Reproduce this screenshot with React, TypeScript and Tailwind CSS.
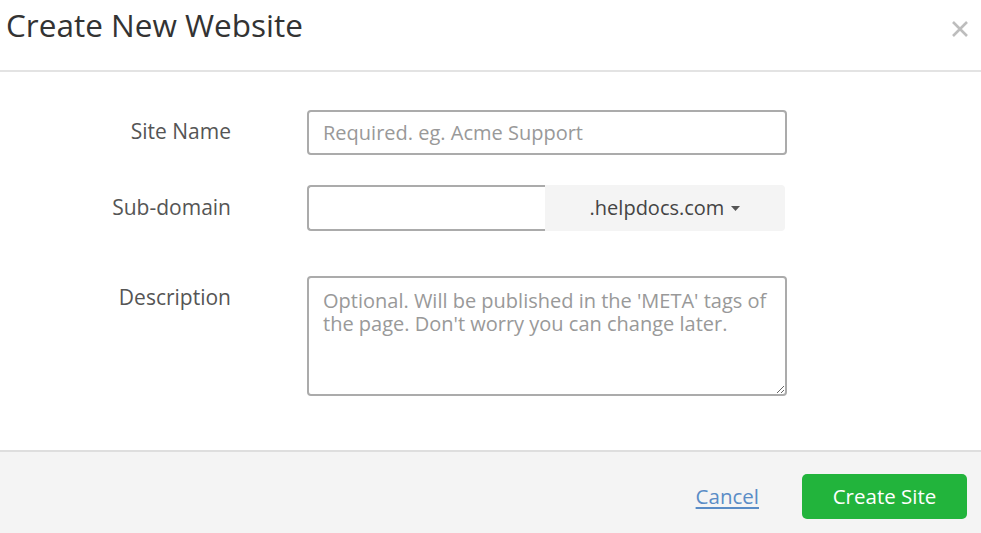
import React from "react";

export default function App() {
  return (
    <div
      className="w-[981px] h-[533px] bg-white flex flex-col overflow-hidden text-[#444]"
      style={{ fontFamily: "'Open Sans', 'Liberation Sans', sans-serif" }}
    >
      <div className="h-[72px] shrink-0 border-b-2 border-[#e3e3e3] flex items-start justify-between">
        <h1 className="pl-[6px] pt-[4px] text-[31.5px] leading-[42px] text-[#333]">Create New Website</h1>
        <button className="mt-[20px] mr-[12px] w-[18px] h-[18px] flex items-center justify-center">
          <svg width="18" height="18" viewBox="0 0 18 18">
            <path d="M2 2 L16 16 M16 2 L2 16" stroke="#bdbdbd" strokeWidth="2.6" strokeLinecap="butt" />
          </svg>
        </button>
      </div>

      <div className="flex-1 pt-[38px]">
        <div className="grid grid-cols-[231px_480px] gap-x-[76px] text-[21px]">
          <label className="pb-[4px] text-right self-center text-[#555] leading-[26px]">Site Name</label>
          <input
            className="h-[45px] border-2 border-[#ababab] rounded-[4px] px-[14px] outline-none placeholder:text-[#999] text-[20px]"
            placeholder="Required. eg. Acme Support"
          />

          <label className="mt-[30px] pb-[2px] text-right self-center text-[#555] leading-[26px]">Sub-domain</label>
          <div className="mt-[30px] flex h-[46px]">
            <input className="w-[238px] h-full border-2 border-r-0 border-[#ababab] rounded-l-[4px] outline-none px-[14px]" />
            <div className="w-[240px] h-full bg-[#f4f4f4] rounded-r-[4px] flex items-center justify-center gap-[7px] text-[20px] text-[#444]">
              <span>.helpdocs.com</span>
              <svg width="9" height="5" viewBox="0 0 9 5">
                <path d="M0 0 H9 L4.5 5 Z" fill="#555" />
              </svg>
            </div>
          </div>

          <label className="mt-[45px] pt-[8px] text-right text-[#555] leading-[26px]">Description</label>
          <textarea
            className="mt-[45px] h-[120px] border-2 border-[#ababab] rounded-[4px] pl-[14px] pr-[8px] py-[11px] outline-none placeholder:text-[#999] text-[20px] leading-[23px] resize-y"
            placeholder="Optional. Will be published in the 'META' tags of the page. Don't worry you can change later."
          />
        </div>
      </div>

      <div className="h-[83px] shrink-0 bg-[#f4f4f4] border-t-2 border-[#dedede] flex items-start justify-end pt-[22px] pr-[14px] gap-[43px]">
        <a href="#" className="mt-[9px] text-[20.5px] leading-[26px] text-[#5a8cc6] underline underline-offset-[3px]">Cancel</a>
        <button className="w-[165px] h-[45px] bg-[#22b43c] rounded-[5px] text-white text-[20.5px]">Create Site</button>
      </div>
    </div>
  );
}
